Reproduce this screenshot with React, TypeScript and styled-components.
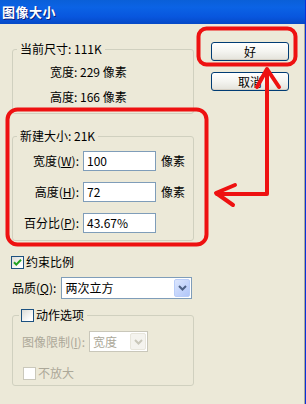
import styled, { createGlobalStyle } from 'styled-components';

const GlobalStyle = createGlobalStyle`
  html, body {
    margin: 0;
    padding: 0;
    background: #ece9d8;
  }
  body {
    font-family: 'Noto Sans CJK SC', 'Liberation Sans', sans-serif;
    font-size: 12px;
    color: #000;
  }
`;

export default function App() {
  return (
    <>
      <GlobalStyle />
      <Window>
        <TitleBar>图像大小</TitleBar>
        <Body>
          <LeftColumn>
            <GroupBox $height={62}>
              <Legend>当前尺寸: 111K</Legend>
              <InfoList>
                <InfoRow>宽度: 229 像素</InfoRow>
                <InfoRow>高度: 166 像素</InfoRow>
              </InfoList>
            </GroupBox>

            <GroupBox $top={15} $bottom={7}>
              <Legend>新建大小: 21K</Legend>
              <FieldGrid>
                <FieldLabel>
                  宽度(<u>W</u>):
                </FieldLabel>
                <TextBox>100</TextBox>
                <Unit>像素</Unit>
                <FieldLabel>
                  高度(<u>H</u>):
                </FieldLabel>
                <TextBox>72</TextBox>
                <Unit>像素</Unit>
                <FieldLabel>
                  百分比(<u>P</u>):
                </FieldLabel>
                <TextBox>43.67%</TextBox>
                <Unit />
              </FieldGrid>
            </GroupBox>

            <CheckRow $top={14}>
              <CheckBox $checked>
                <CheckMark viewBox="0 0 11 11">
                  <path d="M2 5.2 L4.3 7.6 L9 2.8" />
                </CheckMark>
              </CheckBox>
              约束比例
            </CheckRow>

            <QualityRow>
              <span>
                品质(<u>Q</u>):
              </span>
              <Select $width={131}>
                <SelectText>两次立方</SelectText>
                <DropButton>
                  <Chevron viewBox="0 0 9 6">
                    <path d="M1 1 L4.5 4.5 L8 1" />
                  </Chevron>
                </DropButton>
              </Select>
            </QualityRow>

            <GroupBox $top={9} $bottom={5}>
              <CheckLegend>
                <CheckBox />
                动作选项
              </CheckLegend>
              <DisabledRow>
                <span>
                  图像限制(<u>I</u>):
                </span>
                <Select $width={59} $disabled>
                  <SelectText>宽度</SelectText>
                  <DropButton $disabled>
                    <Chevron viewBox="0 0 9 6" $disabled>
                      <path d="M1 1 L4.5 4.5 L8 1" />
                    </Chevron>
                  </DropButton>
                </Select>
              </DisabledRow>
              <CheckRow $top={14} $disabled>
                <CheckBox $disabled />
                不放大
              </CheckRow>
            </GroupBox>
          </LeftColumn>

          <RightColumn>
            <Button>好</Button>
            <Button>取消</Button>
          </RightColumn>
        </Body>

        <Marks viewBox="0 0 306 404">
          <rect x="7.5" y="109.5" width="199" height="135" rx="10" />
          <rect x="198.5" y="28.5" width="97" height="36" rx="8" />
          <polyline points="267,70 267,194 217,194" />
          <polyline points="257,87 267,69 279,87" />
          <polyline points="235,185 216,193 233,205" />
        </Marks>
      </Window>
    </>
  );
}

const Window = styled.div`
  position: relative;
  width: 306px;
  height: 404px;
  box-sizing: border-box;
  background: #ece9d8;
  border-right: 1px solid #0831d9;
  box-shadow: inset -1px 0 0 #aca899;
  overflow: hidden;
`;

const TitleBar = styled.div`
  height: 24px;
  box-sizing: border-box;
  padding: 3px 0 0 2px;
  background: linear-gradient(
    180deg,
    #0a5fd8 0%,
    #0b63e5 30%,
    #0856de 70%,
    #0549c6 100%
  );
  color: #fff;
  font-weight: bold;
  font-size: 13px;
  line-height: 17px;
  letter-spacing: 0.5px;
  text-shadow: 1px 1px 0 #0a1e7a;
`;

const Body = styled.div`
  display: flex;
  padding: 18px 0 0 12px;
`;

const LeftColumn = styled.div`
  width: 182px;
  display: flex;
  flex-direction: column;
`;

const RightColumn = styled.div`
  display: flex;
  flex-direction: column;
  gap: 11px;
  margin-left: 17px;
`;

const GroupBox = styled.fieldset<{ $top?: number; $bottom?: number; $height?: number }>`
  margin: ${(p) => p.$top ?? 0}px 0 0 0;
  padding: 0 0 ${(p) => p.$bottom ?? 8}px 0;
  border: 1px solid #d0d0bf;
  border-radius: 3px;
  min-width: 0;
  ${(p) => (p.$height ? `height: ${p.$height}px;` : '')}
`;

const Legend = styled.legend`
  margin-left: 4px;
  padding: 0 3px;
  line-height: 14px;
  color: #000;
`;

const CheckLegend = styled.legend`
  display: flex;
  align-items: center;
  gap: 2px;
  margin-left: 6px;
  padding: 0 3px 0 2px;
  line-height: 14px;
`;

const InfoList = styled.div`
  display: flex;
  flex-direction: column;
  gap: 11px;
  padding: 9px 0 0 37px;
`;

const InfoRow = styled.div`
  line-height: 14px;
`;

const FieldGrid = styled.div`
  display: grid;
  grid-template-columns: 66px 73px 30px;
  column-gap: 4px;
  row-gap: 11px;
  align-items: center;
  padding-top: 8px;
`;

const FieldLabel = styled.span`
  text-align: right;
  line-height: 14px;
  white-space: nowrap;
`;

const TextBox = styled.div`
  height: 20px;
  box-sizing: border-box;
  border: 1px solid #7f9db9;
  background: #fff;
  padding: 0 3px;
  line-height: 18px;
`;

const Unit = styled.span`
  padding-left: 1px;
  line-height: 14px;
`;

const CheckRow = styled.div<{ $top?: number; $disabled?: boolean }>`
  display: flex;
  align-items: center;
  gap: 2px;
  margin-top: ${(p) => p.$top ?? 0}px;
  margin-left: ${(p) => (p.$disabled ? 10 : -1)}px;
  line-height: 14px;
  color: ${(p) => (p.$disabled ? '#aca899' : '#000')};
`;

const CheckBox = styled.span<{ $checked?: boolean; $disabled?: boolean }>`
  display: inline-flex;
  align-items: center;
  justify-content: center;
  width: 13px;
  height: 13px;
  box-sizing: border-box;
  border: 1px solid ${(p) => (p.$disabled ? '#cac8bb' : '#1c5180')};
  background: ${(p) =>
    p.$disabled ? '#fff' : 'linear-gradient(135deg, #dcdcd7 0%, #fff 80%)'};
`;

const CheckMark = styled.svg`
  width: 11px;
  height: 11px;
  fill: none;
  stroke: #21a121;
  stroke-width: 2;
`;

const QualityRow = styled.div`
  display: flex;
  align-items: center;
  gap: 5px;
  margin-top: 8px;
  line-height: 14px;
`;

const DisabledRow = styled.div`
  display: flex;
  align-items: center;
  gap: 4px;
  padding: 9px 0 0 9px;
  color: #aca899;
  line-height: 14px;
`;

const Select = styled.div<{ $width: number; $disabled?: boolean }>`
  display: flex;
  align-items: stretch;
  width: ${(p) => p.$width}px;
  height: ${(p) => (p.$disabled ? 21 : 22)}px;
  box-sizing: border-box;
  border: 1px solid ${(p) => (p.$disabled ? '#c9c7ba' : '#7f9db9')};
  background: #fff;
  padding: 1px;
  color: ${(p) => (p.$disabled ? '#aca899' : '#000')};
`;

const SelectText = styled.span`
  flex: 1;
  padding-left: 2px;
  line-height: 18px;
`;

const DropButton = styled.span<{ $disabled?: boolean }>`
  display: flex;
  align-items: center;
  justify-content: center;
  width: 16px;
  box-sizing: border-box;
  border: 1px solid ${(p) => (p.$disabled ? '#e8e6dc' : '#b9cdf9')};
  border-radius: 2px;
  background: ${(p) =>
    p.$disabled
      ? '#f4f3ee'
      : 'linear-gradient(135deg, #dce6fd 0%, #c2d3fb 60%, #b1c6f8 100%)'};
`;

const Chevron = styled.svg<{ $disabled?: boolean }>`
  width: 9px;
  height: 6px;
  fill: none;
  stroke: ${(p) => (p.$disabled ? '#c9c7ba' : '#4d6185')};
  stroke-width: 2;
`;

const Button = styled.div`
  width: 78px;
  height: 19px;
  box-sizing: border-box;
  border: 1px solid #003c74;
  border-radius: 3px;
  background: linear-gradient(180deg, #fff 0%, #f4f4f0 50%, #e3e2da 100%);
  box-shadow: inset 0 -1px 0 #d6d0c5;
  text-align: center;
  line-height: 17px;
`;

const Marks = styled.svg`
  position: absolute;
  inset: 0;
  width: 306px;
  height: 404px;
  pointer-events: none;
  fill: none;
  stroke: #ee1111;
  stroke-width: 4;
  stroke-linecap: round;
  stroke-linejoin: round;
`;
